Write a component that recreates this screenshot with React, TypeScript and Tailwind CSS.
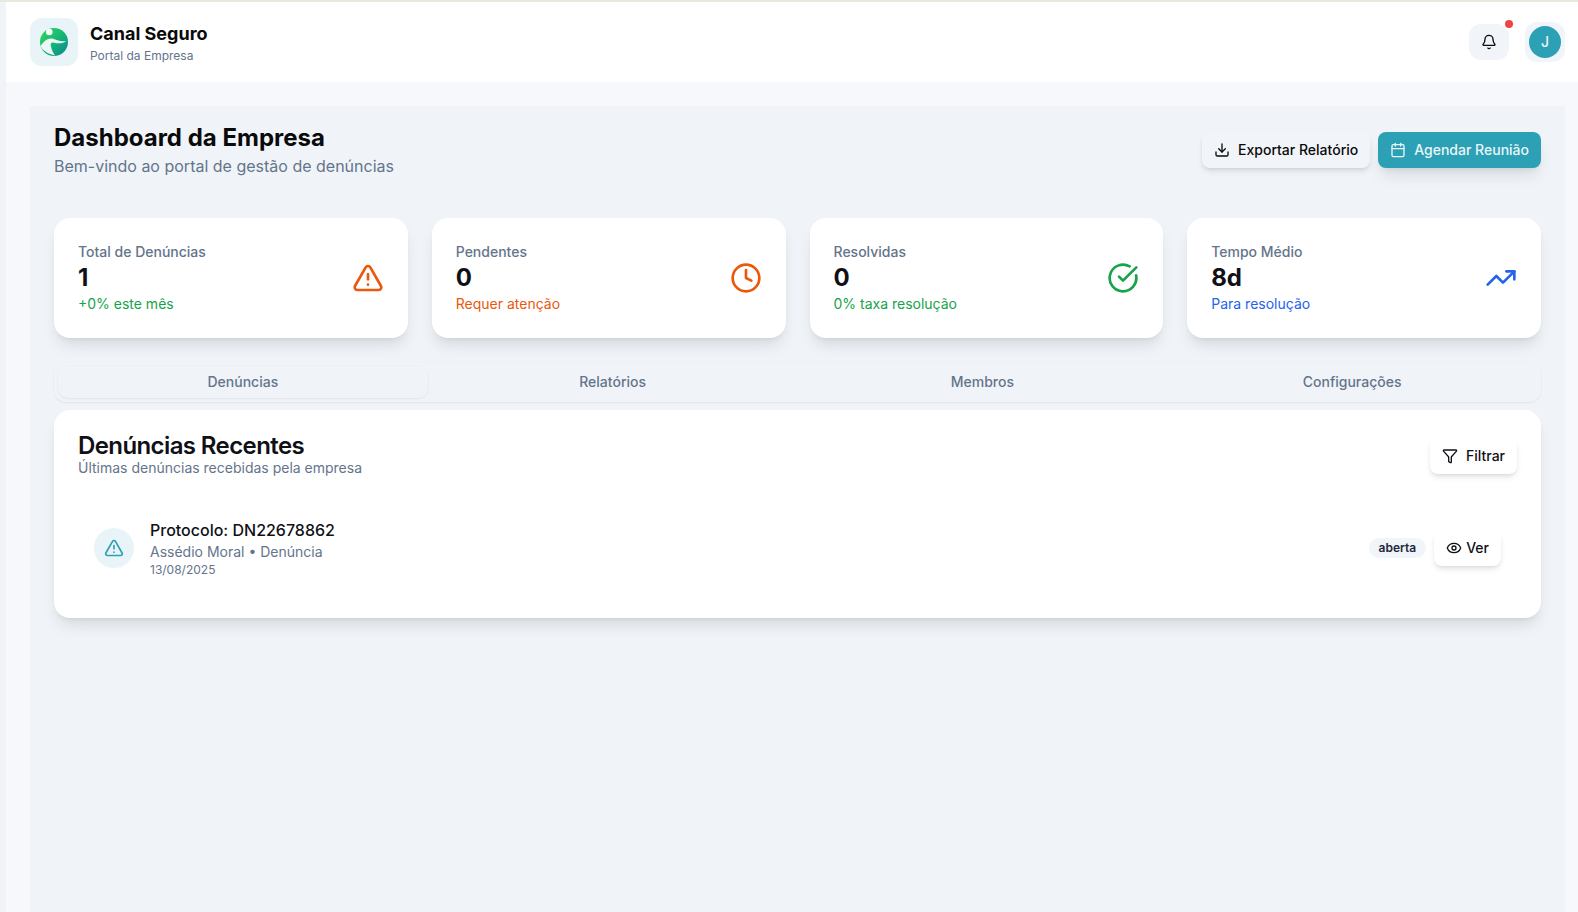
import { Bell, Calendar, CircleCheckBig, Clock, Download, Eye, Funnel, TrendingUp, TriangleAlert } from "lucide-react";

function Logo() {
  return (
    <svg width="28" height="28" viewBox="0 0 28 28">
      <defs>
        <linearGradient id="logoGrad" x1="0.1" y1="0.1" x2="0.9" y2="0.9">
          <stop offset="0" stopColor="#2fd35f" />
          <stop offset="0.55" stopColor="#14b478" />
          <stop offset="1" stopColor="#0f8f8c" />
        </linearGradient>
      </defs>
      <circle cx="14" cy="14" r="14" fill="url(#logoGrad)" />
      <circle cx="9.3" cy="4" r="3.3" fill="#f4fbfb" />
      <path d="M0.5 18 C3.5 13.5 7 10.5 11 10.5 C15 10.5 19 14 26.5 13.2 C21 16 16 15.5 13.5 14.5 C11 14 10 16 11 18.5 C11.5 21 12.5 24 15 27.5 C8 26 3 23 0.5 18 Z" fill="#edf7f8" />
    </svg>
  );
}

const stats = [
  { label: "Total de Denúncias", value: "1", note: "+0% este mês", noteClass: "text-[#16a34a]", Icon: TriangleAlert, iconClass: "text-[#ea580c]" },
  { label: "Pendentes", value: "0", note: "Requer atenção", noteClass: "text-[#ea580c]", Icon: Clock, iconClass: "text-[#ea580c]" },
  { label: "Resolvidas", value: "0", note: "0% taxa resolução", noteClass: "text-[#16a34a]", Icon: CircleCheckBig, iconClass: "text-[#16a34a]" },
  { label: "Tempo Médio", value: "8d", note: "Para resolução", noteClass: "text-[#2563eb]", Icon: TrendingUp, iconClass: "text-[#2563eb]" },
];

const tabs = ["Denúncias", "Relatórios", "Membros", "Configurações"];

export default function App() {
  return (
    <div className="flex h-[912px] flex-col overflow-hidden bg-[#f6f8fb] font-['Inter',sans-serif] text-[#0f172a]">
      <div className="h-[2px] shrink-0 bg-[#e9e8dc]" />
      <div className="flex min-h-0 flex-1">
        <div className="w-[6px] shrink-0 bg-[#f0f3f7]" />
        <div className="flex min-w-0 flex-1 flex-col">
          <header className="flex h-[80px] shrink-0 items-center justify-between bg-white pl-6 pr-[13px]">
            <div className="flex items-center gap-3">
              <div className="flex h-12 w-12 items-center justify-center rounded-xl bg-[#e8f4f7]">
                <Logo />
              </div>
              <div>
                <div className="text-[18px] leading-7 font-bold text-[#0a0a0a]">Canal Seguro</div>
                <div className="text-xs leading-4 text-[#64748b]">Portal da Empresa</div>
              </div>
            </div>
            <div className="flex items-center gap-4">
              <button className="relative flex h-9 w-10 items-center justify-center rounded-xl bg-[#f1f5f9]">
                <Bell size={16} className="text-[#0a0a0a]" />
                <span className="absolute -top-1 -right-1 h-2 w-2 rounded-full bg-[#ef4444]" />
              </button>
              <div className="flex h-10 w-10 items-center justify-center rounded-xl bg-[#f1f5f9]">
                <div className="flex h-8 w-8 items-center justify-center rounded-full bg-[#2ca0b4] text-sm font-medium text-[#eaf6f8]">J</div>
              </div>
            </div>
          </header>

          <main className="mt-6 mr-[13px] ml-6 flex-1 bg-[#f0f4f9] px-6 pt-4">
            <div className="flex items-center justify-between">
              <div>
                <h1 className="text-2xl leading-8 font-bold text-[#0a0a0a]">Dashboard da Empresa</h1>
                <p className="text-base leading-6 text-[#64748b]">Bem-vindo ao portal de gestão de denúncias</p>
              </div>
              <div className="flex items-center gap-2">
                <button className="flex h-9 items-center gap-2 rounded-lg bg-[#f1f5f9] px-3 text-sm font-medium text-[#0a0a0a] shadow-md">
                  <Download size={16} />
                  Exportar Relatório
                </button>
                <button className="flex h-9 items-center gap-2 rounded-lg bg-[#2ca0b4] px-3 text-sm font-medium text-[#eaf6f8] shadow-lg">
                  <Calendar size={16} />
                  Agendar Reunião
                </button>
              </div>
            </div>

            <div className="mt-10 grid grid-cols-4 gap-6">
              {stats.map(({ label, value, note, noteClass, Icon, iconClass }) => (
                <div key={label} className="flex items-center justify-between rounded-2xl bg-white p-6 shadow-lg">
                  <div>
                    <div className="text-sm leading-5 font-medium text-[#64748b]">{label}</div>
                    <div className="text-2xl leading-8 font-bold text-[#0f1117]">{value}</div>
                    <div className={`text-sm leading-5 ${noteClass}`}>{note}</div>
                  </div>
                  <Icon size={32} className={iconClass} />
                </div>
              ))}
            </div>

            <div className="mt-6 grid h-10 grid-cols-4 rounded-xl p-1 shadow-[0_0_0_1px_rgba(15,23,42,0.012),0_1px_2px_rgba(15,23,42,0.05)]">
              {tabs.map((t, i) => (
                <div
                  key={t}
                  className={`flex items-center justify-center rounded-[10px] text-sm font-medium text-[#64748b] ${i === 0 ? "shadow-[0_0_0_1px_rgba(15,23,42,0.012),0_1px_2px_rgba(15,23,42,0.05)]" : ""}`}
                >
                  {t}
                </div>
              ))}
            </div>

            <section className="mt-2 rounded-2xl bg-white p-6 shadow-lg">
              <div className="flex items-center justify-between">
                <div>
                  <h2 className="text-2xl leading-6 font-semibold tracking-tight text-[#0f1117]">Denúncias Recentes</h2>
                  <p className="text-sm leading-5 text-[#64748b]">Últimas denúncias recebidas pela empresa</p>
                </div>
                <button className="flex h-9 items-center gap-2 rounded-lg bg-white px-3 text-sm font-medium text-[#0f1117] shadow-md">
                  <Funnel size={16} />
                  Filtrar
                </button>
              </div>

              <div className="mt-6 flex items-center justify-between p-4">
                <div className="flex items-center gap-4">
                  <div className="flex h-10 w-10 items-center justify-center rounded-full bg-[#e8f4f7]">
                    <TriangleAlert size={20} className="text-[#2ca0b4]" />
                  </div>
                  <div>
                    <div className="text-base leading-6 font-medium text-[#0f1117]">Protocolo: DN22678862</div>
                    <div className="text-sm leading-5 text-[#64748b]">Assédio Moral • Denúncia</div>
                    <div className="text-xs leading-4 text-[#64748b]">13/08/2025</div>
                  </div>
                </div>
                <div className="flex items-center gap-2">
                  <span className="rounded-full bg-[#f1f5f9] px-2.5 py-0.5 text-xs leading-4 font-semibold text-[#1e293b]">aberta</span>
                  <button className="flex h-9 items-center gap-1 rounded-lg bg-white px-3 text-sm font-medium text-[#0f1117] shadow-md">
                    <Eye size={16} />
                    Ver
                  </button>
                </div>
              </div>
            </section>
          </main>
        </div>
      </div>
    </div>
  );
}
